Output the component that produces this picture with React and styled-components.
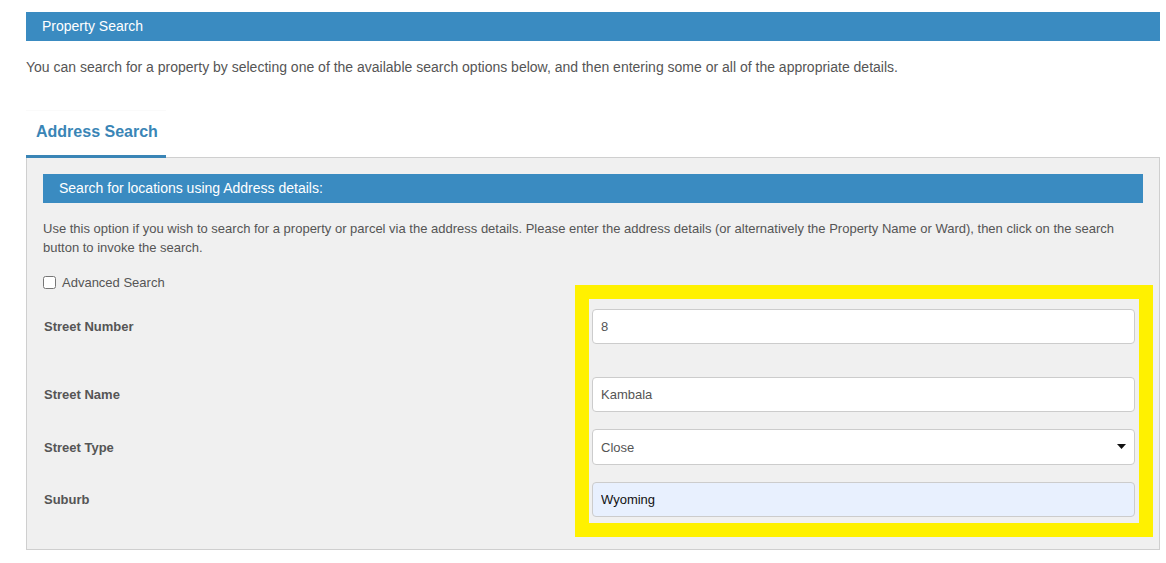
import React from "react";
import styled, { createGlobalStyle } from "styled-components";

const Global = createGlobalStyle`
  html, body { margin: 0; padding: 0; background: #fff; }
  body { font-family: "Liberation Sans", Arial, sans-serif; color: #555; }
  * { box-sizing: border-box; }
`;

const Page = styled.div`
  padding: 12px 6px 0 26px;
`;

const TitleBar = styled.div`
  height: 29px;
  background: #3a8bc1;
  color: #fff;
  font-size: 14px;
  line-height: 29px;
  padding-left: 16px;
`;

const Intro = styled.p`
  margin: 18px 0 0;
  font-size: 14px;
  line-height: 16px;
  color: #555;
`;

const TabBar = styled.div`
  margin-top: 35px;
  display: flex;
  border-bottom: 1px solid #cfcfcf;
`;

const Tab = styled.div`
  width: 140px;
  height: 48px;
  padding: 12px 0 0 10px;
  font-size: 16px;
  font-weight: bold;
  color: #3a85b6;
  border-top: 1px solid #fafafa;
  border-bottom: 3px solid #3a85b6;
  margin-bottom: -1px;
`;

const Panel = styled.div`
  background: #f0f0f0;
  border: 1px solid #cfcfcf;
  border-top: none;
  padding: 16px 16px 12px 16px;
`;

const SectionBar = styled.div`
  height: 29px;
  background: #3a8bc1;
  color: #fff;
  font-size: 14px;
  line-height: 29px;
  padding-left: 16px;
`;

const Description = styled.p`
  margin: 16px 0 0;
  font-size: 13px;
  line-height: 19px;
  color: #555;
`;

const CheckRow = styled.label`
  display: flex;
  align-items: center;
  gap: 6px;
  margin-top: 18px;
  font-size: 13px;
  color: #555;
`;

const Check = styled.input`
  width: 13px;
  height: 13px;
  margin: 0;
`;

const Form = styled.div`
  display: flex;
  margin: -5px -10px 0 0;
`;

const LabelColumn = styled.div`
  flex: 1;
  padding-top: 24px;
  display: flex;
  flex-direction: column;
`;

const Highlight = styled.div`
  width: 578px;
  border: 14px solid #fff100;
  padding: 10px 4px 6px 3px;
  display: flex;
  flex-direction: column;
`;

const Slot = styled.div`
  height: ${(p) => p.$h || 35}px;
  margin-top: ${(p) => p.$gap || 0}px;
  display: flex;
  align-items: center;
  position: relative;
`;

const Label = styled.span`
  font-size: 13px;
  font-weight: bold;
  color: #555;
  padding-left: 1px;
`;

const TextInput = styled.input`
  width: 100%;
  height: 100%;
  border: 1px solid #cccccc;
  border-radius: 4px;
  background: ${(p) => (p.$filled ? "#e8f0fe" : "#fff")};
  color: ${(p) => (p.$filled ? "#111" : "#555")};
  font-family: "Liberation Sans", Arial, sans-serif;
  font-size: 13px;
  padding: 0 8px;
  outline: none;
`;

const Select = styled.select`
  width: 100%;
  height: 100%;
  appearance: none;
  border: 1px solid #cccccc;
  border-radius: 4px;
  background: #fff;
  color: #555;
  font-family: "Liberation Sans", Arial, sans-serif;
  font-size: 13px;
  padding: 0 8px;
  outline: none;
`;

const Caret = styled.svg`
  position: absolute;
  right: 9px;
  top: 15px;
  pointer-events: none;
`;

const fields = [
  { label: "Street Number", gap: 0, h: 35 },
  { label: "Street Name", gap: 33, h: 35 },
  { label: "Street Type", gap: 17, h: 36 },
  { label: "Suburb", gap: 17, h: 35 },
];

export default function App() {
  return (
    <>
      <Global />
      <Page>
        <TitleBar>Property Search</TitleBar>
        <Intro>
          You can search for a property by selecting one of the available search options below, and then entering some or all of the appropriate details.
        </Intro>
        <TabBar>
          <Tab>Address Search</Tab>
        </TabBar>
        <Panel>
          <SectionBar>Search for locations using Address details:</SectionBar>
          <Description>
            Use this option if you wish to search for a property or parcel via the address details. Please enter the address details (or alternatively the Property Name or Ward), then click on the search button to invoke the search.
          </Description>
          <CheckRow>
            <Check type="checkbox" />
            Advanced Search
          </CheckRow>
          <Form>
            <LabelColumn>
              {fields.map((f) => (
                <Slot key={f.label} $gap={f.gap} $h={f.h}>
                  <Label>{f.label}</Label>
                </Slot>
              ))}
            </LabelColumn>
            <Highlight>
              <Slot $gap={0} $h={35}>
                <TextInput defaultValue="8" />
              </Slot>
              <Slot $gap={33} $h={35}>
                <TextInput defaultValue="Kambala" />
              </Slot>
              <Slot $gap={17} $h={36}>
                <Select defaultValue="Close">
                  <option>Close</option>
                  <option>Street</option>
                  <option>Road</option>
                </Select>
                <Caret width="9" height="5" viewBox="0 0 9 5">
                  <path d="M0 0 L9 0 L4.5 5 Z" fill="#111" />
                </Caret>
              </Slot>
              <Slot $gap={17} $h={35}>
                <TextInput $filled defaultValue="Wyoming" />
              </Slot>
            </Highlight>
          </Form>
        </Panel>
      </Page>
    </>
  );
}
